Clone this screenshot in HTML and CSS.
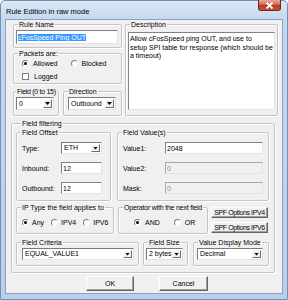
FILE: index.html
```html
<!DOCTYPE html>
<html lang="en">
  <head>
    <meta charset="UTF-8" />
    <meta name="viewport" content="width=device-width, initial-scale=1.0" />
    <title>Rule Edition in raw mode</title>
    <link rel="stylesheet" href="styles.css">
  </head>
  <body>
    <div class="window">
      <div class="titlebar">
        <span class="title">Rule Edition in raw mode</span>
        <span class="close">
          <svg width="9" height="7" viewBox="0 0 9 7"><path d="M1.5 0.5 L7.5 6.5 M7.5 0.5 L1.5 6.5" stroke="#fff" stroke-width="1.8" /></svg>
        </span>
      </div>

      <div class="client">
        <div class="top">
          <div class="left-col">
            <fieldset class="grp rule-name">
              <legend>Rule Name</legend>
              <div class="edit"><span class="sel">cFosSpeed Ping OUT</span></div>
            </fieldset>

            <fieldset class="grp packets">
              <legend>Packets are:</legend>
              <div class="opts packet-opts">
                <span class="opt"><i class="radio on"></i>Allowed</span>
                <span class="opt"><i class="radio"></i>Blocked</span>
              </div>
              <div class="opts logged">
                <span class="opt"><i class="check"></i>Logged</span>
              </div>
            </fieldset>

            <div class="pair">
              <fieldset class="grp field-no">
                <legend>Field (0 to 15)</legend>
                <div class="combo"><span class="val">0</span><span class="btn"></span></div>
              </fieldset>
              <fieldset class="grp direction">
                <legend>Direction</legend>
                <div class="combo"><span class="val">Outbound</span><span class="btn"></span></div>
              </fieldset>
            </div>
          </div>

          <fieldset class="grp desc">
            <legend>Description</legend>
            <div class="memo">Allow cFosSpeed ping OUT, and use to<br>setup SPI table for response (which should be<br>a timeout)</div>
          </fieldset>
        </div>

        <fieldset class="grp filtering">
          <legend>Field filtering</legend>

          <div class="row row1">
            <fieldset class="grp offset">
              <legend>Field Offset</legend>
              <div class="form offset-form">
                <span>Type:</span>
                <div class="combo small"><span class="val">ETH</span><span class="btn"></span></div>
                <span>Inbound:</span>
                <div class="edit small">12</div>
                <span>Outbound:</span>
                <div class="edit small">12</div>
              </div>
            </fieldset>
            <fieldset class="grp values">
              <legend>Field Value(s)</legend>
              <div class="form values-form">
                <span>Value1:</span>
                <div class="edit small">2048</div>
                <span>Value2:</span>
                <div class="edit small off">0</div>
                <span>Mask:</span>
                <div class="edit small off">0</div>
              </div>
            </fieldset>
          </div>

          <div class="row row2">
            <fieldset class="grp ip-type">
              <legend>IP Type the field applies to</legend>
              <div class="opts ip-opts">
                <span class="opt"><i class="radio on"></i>Any</span>
                <span class="opt"><i class="radio"></i>IPV4</span>
                <span class="opt"><i class="radio"></i>IPV6</span>
              </div>
            </fieldset>
            <fieldset class="grp operator">
              <legend>Operator with the next field</legend>
              <div class="opts op-opts">
                <span class="opt"><i class="radio on"></i>AND</span>
                <span class="opt"><i class="radio"></i>OR</span>
              </div>
            </fieldset>
            <div class="spf">
              <button class="btn-push">SPF Options IPV4</button>
              <button class="btn-push">SPF Options IPV6</button>
            </div>
          </div>

          <div class="row row3">
            <fieldset class="grp criteria">
              <legend>Field Criteria</legend>
              <div class="combo small"><span class="val">EQUAL_VALUE1</span><span class="btn"></span></div>
            </fieldset>
            <fieldset class="grp size">
              <legend>Field Size</legend>
              <div class="combo small"><span class="val">2 bytes</span><span class="btn"></span></div>
            </fieldset>
            <fieldset class="grp mode">
              <legend>Value Display Mode</legend>
              <div class="combo small"><span class="val">Decimal</span><span class="btn"></span></div>
            </fieldset>
          </div>
        </fieldset>

        <div class="actions">
          <button class="btn-push ok">OK</button>
          <button class="btn-push cancel">Cancel</button>
        </div>
      </div>
    </div>
  </body>
</html>
```

FILE: styles.css
```css
*,
*::before,
*::after {
  box-sizing: border-box;
}

body {
  margin: 0;
  font-family: 'Liberation Sans', Arial, sans-serif;
  font-size: 7px;
  color: #000;
  background: #fff;
}

/* window frame */
.window {
  width: 288px;
  height: 300px;
  padding: 0 5px 6px 5px;
  border: 1px solid #7590b3;
  border-radius: 5px 5px 0 0;
  background: linear-gradient(#dce8f5, #c3d7ee 20px, #b9d0ea);
}
.titlebar {
  height: 19px;
  display: flex;
  align-items: flex-start;
  justify-content: space-between;
}
.title {
  font-size: 7.5px;
  line-height: 9px;
  margin-top: 6px;
}
.close {
  width: 23px;
  height: 11px;
  margin-right: 1px;
  margin-top: -1px;
  display: flex;
  align-items: center;
  justify-content: center;
  border: 1px solid #6b2a20;
  border-top: none;
  border-radius: 0 0 3px 3px;
  background: linear-gradient(#e9a797, #cf6a55 45%, #b93a24 55%, #c9533b);
}

.client {
  height: 273px;
  padding-left: 7px;
  background: #f0f0f0;
  box-shadow: 0 0 0 1px #8aa3c2;
}

/* group boxes */
.grp {
  margin: 0;
  padding: 0;
  min-width: 0;
  border: 1px solid #c4c4c4;
  border-radius: 2px;
  box-shadow: inset 1px 1px #fff, 1px 1px #fff;
}
.grp > legend {
  margin-left: 4px;
  padding: 0 1px;
  line-height: 9px;
  white-space: nowrap;
}

.top {
  display: flex;
  gap: 3px;
}
.left-col {
  width: 109px;
}
.rule-name {
  height: 28px;
}
.packets {
  height: 35px;
  margin-top: 1px;
}
.pair {
  display: flex;
  gap: 4px;
  margin-top: 3px;
}
.field-no {
  width: 46px;
  height: 29px;
}
.field-no > legend {
  margin-left: 2px;
  letter-spacing: -0.3px;
}
.direction {
  width: 59px;
  height: 29px;
}
.desc {
  width: 153px;
  height: 96px;
}

/* text boxes */
.edit {
  height: 14px;
  margin: 1px 3px 0 2px;
  padding: 2px 1px 0;
  line-height: 9px;
  background: #fff;
  border: 1px solid;
  border-color: #828282 #e3e3e3 #e3e3e3 #828282;
  white-space: nowrap;
  overflow: hidden;
}
.edit.small {
  height: 12px;
  margin: 0;
  padding-top: 1px;
}
.edit.off {
  background: #f0f0f0;
  color: #8d8d8d;
  border-color: #a6a6a6 #e3e3e3 #e3e3e3 #a6a6a6;
}
.sel {
  background: #3399ff;
  color: #fff;
}
.memo {
  height: 78px;
  margin: 3px 2px 0;
  padding: 2px 1px;
  line-height: 8.5px;
  background: #fff;
  border: 1px solid;
  border-color: #828282 #e3e3e3 #e3e3e3 #828282;
  white-space: nowrap;
  overflow: hidden;
}

/* combo boxes */
.combo {
  height: 13px;
  display: flex;
  padding: 1px;
  background: #fff;
  border: 1px solid;
  border-color: #7b7b7b #e3e3e3 #e3e3e3 #7b7b7b;
}
.combo .val {
  flex: 1;
  padding-left: 1px;
  line-height: 9px;
  white-space: nowrap;
}
.combo .btn {
  width: 9px;
  display: flex;
  align-items: center;
  justify-content: center;
  background: #f0f0f0;
  border: 1px solid;
  border-color: #fff #6f6f6f #6f6f6f #fff;
}
.combo .btn::after {
  content: '';
  width: 5px;
  height: 3px;
  background: #000;
  clip-path: polygon(0 0, 100% 0, 50% 100%);
}
.combo.small {
  height: 12px;
}
.combo.small .val {
  line-height: 8px;
}
.field-no .combo {
  margin: 1px 4px 0 2px;
}
.direction .combo {
  margin: 1px 5px 0 4px;
}

/* radios and checks */
.opts {
  display: flex;
  height: 9px;
  align-items: center;
}
.opt {
  display: flex;
  align-items: center;
  line-height: 9px;
  white-space: nowrap;
}
.radio,
.check {
  width: 7px;
  height: 7px;
  margin-right: 4px;
  display: flex;
  align-items: center;
  justify-content: center;
  background: #fff;
  border: 1px solid;
}
.radio {
  border-radius: 50%;
  border-color: #7f7f7f #f4f4f4 #f4f4f4 #7f7f7f;
}
.radio.on::after {
  content: '';
  width: 3px;
  height: 3px;
  border-radius: 50%;
  background: #000;
}
.check {
  margin-right: 5px;
  border-color: #7f7f7f;
}
.packet-opts {
  margin-top: 1px;
  padding-left: 8px;
  gap: 13px;
}
.logged {
  margin-top: 4px;
  padding-left: 8px;
}

/* field filtering */
.filtering {
  width: 264px;
  height: 154px;
  margin: 3px 0 0 -2px;
  padding: 0 5px 0 4px;
}
.filtering > legend {
  margin-left: 5px;
}
.row {
  display: flex;
}
.row1 {
  gap: 6px;
}
.offset {
  width: 95px;
  height: 73px;
}
.values {
  width: 152px;
  height: 73px;
}
.form {
  display: grid;
  grid-auto-rows: 12px;
  row-gap: 8px;
  margin-top: 5px;
  padding-left: 5px;
  align-items: center;
}
.offset-form {
  grid-template-columns: 39px 41px;
}
.values-form {
  grid-template-columns: 42px 98px;
}

.row2 {
  margin-top: 2px;
  gap: 4px;
}
.ip-type {
  width: 98px;
  height: 31px;
}
.operator {
  width: 90px;
  height: 31px;
}
.operator > legend {
  margin-left: 4px;
  letter-spacing: -0.2px;
}
.ip-opts {
  margin-top: 6px;
  padding-left: 5px;
  gap: 7px;
}
.ip-opts .radio {
  margin-right: 3px;
}
.op-opts {
  margin-top: 6px;
  padding-left: 15px;
  gap: 14px;
}
.spf {
  width: 57px;
  margin-top: 4px;
  margin-left: -1px;
  display: flex;
  flex-direction: column;
  gap: 4px;
}
.spf .btn-push {
  height: 11px;
  width: 100%;
  letter-spacing: -0.4px;
}

.row3 {
  margin-top: 4px;
}
.criteria {
  width: 123px;
  height: 28px;
}
.size {
  width: 45px;
  height: 28px;
  margin-left: 4px;
}
.mode {
  width: 76px;
  height: 28px;
  margin-left: 5px;
}
.criteria .combo {
  margin: 1px 4px 0 5px;
}
.size .combo {
  margin: 1px 4px 0 2px;
}
.mode .combo {
  margin: 1px 5px 0 3px;
}

/* push buttons */
.btn-push {
  margin: 0;
  padding: 0;
  font-family: inherit;
  font-size: 7px;
  line-height: 9px;
  color: #000;
  background: #f0f0f0;
  border: 1px solid;
  border-color: #fdfdfd #646464 #646464 #fdfdfd;
  box-shadow: inset -1px -1px #a0a0a0;
  white-space: nowrap;
  overflow: hidden;
}
.actions {
  display: flex;
  gap: 25px;
  margin-top: 3px;
  padding-left: 73px;
}
.actions .btn-push {
  height: 15px;
}
.ok {
  width: 48px;
}
.cancel {
  width: 49px;
}
```
